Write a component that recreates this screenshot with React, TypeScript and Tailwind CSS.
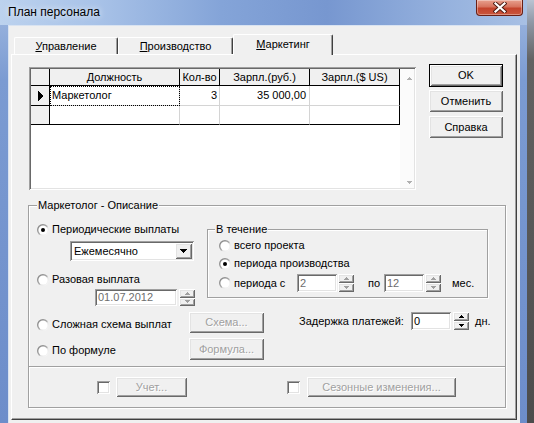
import { useId } from "react";

const raised =
  "shadow-[inset_1px_1px_0_#ffffff,inset_-1px_-1px_0_#696969,inset_2px_2px_0_#e3e3e3,inset_-2px_-2px_0_#a0a0a0]";
const sunken =
  "shadow-[inset_1px_1px_0_#a0a0a0,inset_-1px_-1px_0_#ffffff,inset_2px_2px_0_#696969,inset_-2px_-2px_0_#e3e3e3]";
const etched = "border border-[#a0a0a0] shadow-[inset_1px_1px_0_#ffffff,1px_1px_0_#ffffff]";
const greyText = "text-[#a0a0a0] [text-shadow:1px_1px_0_#ffffff]";

function Radio({ checked = false }: { checked?: boolean }) {
  const id = "r" + useId().replace(/[^a-zA-Z0-9]/g, "");
  return (
    <svg width="12" height="12" viewBox="0 0 12 12" className="shrink-0">
      <defs>
        <linearGradient id={id} x1="0" y1="0" x2="1" y2="1">
          <stop offset="0" stopColor="#7a7a7a" />
          <stop offset="0.5" stopColor="#a8a8a8" />
          <stop offset="0.6" stopColor="#e6e6e6" />
          <stop offset="1" stopColor="#ffffff" />
        </linearGradient>
      </defs>
      <circle cx="6" cy="6" r="6" fill={`url(#${id})`} />
      <circle cx="6" cy="6" r="4.6" fill="#ffffff" />
      {checked && <circle cx="6" cy="6" r="2" fill="#000000" />}
    </svg>
  );
}

function RadioLabel({ checked, children }: { checked?: boolean; children: React.ReactNode }) {
  return (
    <div className="flex h-[13px] items-center gap-[3px] whitespace-nowrap">
      <Radio checked={checked} />
      <span>{children}</span>
    </div>
  );
}

function Arrow({ up, color }: { up?: boolean; color: string }) {
  return (
    <svg width="5" height="3" viewBox="0 0 5 3" shapeRendering="crispEdges">
      {up ? (
        <>
          <rect x="2" y="0" width="1" height="1" fill={color} />
          <rect x="1" y="1" width="3" height="1" fill={color} />
          <rect x="0" y="2" width="5" height="1" fill={color} />
        </>
      ) : (
        <>
          <rect x="0" y="0" width="5" height="1" fill={color} />
          <rect x="1" y="1" width="3" height="1" fill={color} />
          <rect x="2" y="2" width="1" height="1" fill={color} />
        </>
      )}
    </svg>
  );
}

function Spin({ enabled = false, className = "" }: { enabled?: boolean; className?: string }) {
  const c = enabled ? "#000000" : "#a0a0a0";
  return (
    <div className={`flex w-[16px] shrink-0 flex-col ${className}`}>
      <div className={`flex flex-1 items-center justify-center bg-[#f0f0f0] ${raised}`}>
        <Arrow up color={c} />
      </div>
      <div className={`flex flex-1 items-center justify-center bg-[#f0f0f0] ${raised}`}>
        <Arrow color={c} />
      </div>
    </div>
  );
}

function Field({ value, disabled = false, className = "" }: { value: string; disabled?: boolean; className?: string }) {
  return (
    <div className={`flex shrink-0 items-center bg-white pl-[3px] ${sunken} ${className} ${disabled ? "text-[#6d6d6d]" : ""}`}>
      {value}
    </div>
  );
}

function Btn({
  children,
  className = "",
  disabled = false,
  isDefault = false,
}: {
  children: React.ReactNode;
  className?: string;
  disabled?: boolean;
  isDefault?: boolean;
}) {
  return (
    <div className={`shrink-0 bg-[#f0f0f0] ${isDefault ? "border border-black" : ""} ${className}`}>
      <div className={`flex h-full w-full items-center justify-center whitespace-nowrap ${raised} ${disabled ? greyText : ""}`}>
        {children}
      </div>
    </div>
  );
}

function Checkbox() {
  return <div className={`h-[13px] w-[13px] shrink-0 bg-white ${sunken}`} />;
}

function HeadCell({ className, children }: { className: string; children: React.ReactNode }) {
  return (
    <div className={`flex items-center justify-center border-r border-b border-black bg-[#f0f0f0] ${className}`}>
      {children}
    </div>
  );
}

function Grid() {
  return (
    <div className={`mt-[12px] flex h-[123px] w-[387px] shrink-0 bg-white p-[2px] ${sunken}`}>
      <div className="flex w-[369px] flex-col">
        <div className="flex h-[17px]">
          <div className="w-[19px] border-r border-b border-black bg-[#f0f0f0]" />
          <HeadCell className="w-[130px]">Должность</HeadCell>
          <HeadCell className="w-[40px]">Кол-во</HeadCell>
          <HeadCell className="w-[90px]">Зарпл.(руб.)</HeadCell>
          <HeadCell className="w-[90px]">Зарпл.($ US)</HeadCell>
        </div>
        <div className="flex h-[20px]">
          <div className="flex w-[19px] items-center justify-center border-r border-b border-black bg-[#f0f0f0] pl-[2px]">
            <svg width="6" height="10" viewBox="0 0 6 10" shapeRendering="crispEdges">
              <path d="M0 0H1V10H0zM1 1H2V9H1zM2 2H3V8H2zM3 3H4V7H3zM4 4H5V6H4z" fill="#000" />
            </svg>
          </div>
          <div className="relative flex w-[130px] items-center border-r border-b border-[#d4d4d4] pl-[2px]">
            <div className="absolute inset-0 right-[-1px] bottom-[-1px] border border-dotted border-black" />
            Маркетолог
          </div>
          <div className="flex w-[40px] items-center justify-end border-r border-b border-[#d4d4d4] pr-[2px]">3</div>
          <div className="flex w-[90px] items-center justify-end border-r border-b border-[#d4d4d4] pr-[3px]">
            35 000,00
          </div>
          <div className="w-[90px] border-r border-b border-r-black border-b-[#d4d4d4]" />
        </div>
        <div className="flex h-[19px]">
          <div className="w-[19px] border-r border-b border-black bg-[#f0f0f0]" />
          <div className="w-[130px] border-r border-b border-r-[#d4d4d4] border-b-black" />
          <div className="w-[40px] border-r border-b border-r-[#d4d4d4] border-b-black" />
          <div className="w-[90px] border-r border-b border-r-[#d4d4d4] border-b-black" />
          <div className="w-[90px] border-r border-b border-black" />
        </div>
      </div>
      <div className="flex w-[14px] flex-col items-center justify-between bg-[#fbfbfb] pt-[8px] pb-[4px] pl-[4px]">
        <Arrow up color="#b0b0b0" />
        <Arrow color="#b0b0b0" />
      </div>
    </div>
  );
}

function Tab({ className, selected = false, children }: { className: string; selected?: boolean; children: React.ReactNode }) {
  return (
    <div
      className={`flex shrink-0 items-center justify-center rounded-t-[2px] border-t border-r border-l border-t-white border-r-[#404040] border-l-white shadow-[inset_-1px_0_0_#a0a0a0] ${
        selected ? "relative z-10 -mb-px h-[21px] bg-[#f0f0f0] pb-[2px]" : "h-[17px]"
      } ${className}`}
    >
      {children}
    </div>
  );
}

function CloseButton() {
  return (
    <div className="mr-[4px] flex h-[16px] w-[47px] items-center justify-center rounded-b-[4px] border border-t-0 border-[#6a1f14] bg-[linear-gradient(180deg,#e8a08e_0%,#d7735e_45%,#c4432c_55%,#c9563c_100%)] shadow-[inset_0_0_0_1px_rgba(255,255,255,0.35)]">
      <svg width="14" height="11" viewBox="0 0 14 11">
        <path d="M2.5 1.5L11.5 9.5M11.5 1.5L2.5 9.5" stroke="#4b1a12" strokeWidth="4" strokeLinecap="square" />
        <path d="M2.5 1.5L11.5 9.5M11.5 1.5L2.5 9.5" stroke="#ffffff" strokeWidth="2.2" strokeLinecap="square" />
      </svg>
    </div>
  );
}

export default function App() {
  return (
    <div className="flex h-[423px] w-[534px] overflow-hidden bg-[#4f4f4f] font-['Liberation_Sans',Arial,sans-serif] text-[11px] leading-[13px] text-black">
      <div className="flex w-[527px] shrink-0 flex-col bg-[linear-gradient(180deg,#9fb8e0_0px,#7b9bd2_80px,#6d8dca_100%)]">
        <div className="flex h-[25px] shrink-0 items-start justify-between bg-[linear-gradient(90deg,#bcd2ee_0%,#a9c3e8_18%,#84a4d8_42%,#7797d0_62%,#96b2de_85%,#a8c0e4_100%)]">
          <span className="pt-[5px] pl-[8px] text-[12px] leading-[15px] [text-shadow:0_0_6px_#ffffff]">План персонала</span>
          <CloseButton />
        </div>
        <div className="flex min-h-0 flex-1 pr-[7px] pl-[8px]">
          <div className="flex-1 bg-[#f0f0f0] pt-[9px] pl-[3px] shadow-[inset_1px_1px_0_#d9e3f1]">
            <div className="w-[506px]">
              <div className="flex h-[20px] items-end pl-[3px]">
                <Tab className="w-[104px]">
                  <span><span className="underline">У</span>правление</span>
                </Tab>
                <Tab className="w-[115px]">
                  <span><span className="underline">П</span>роизводство</span>
                </Tab>
                <Tab className="w-[100px]" selected>
                  <span><span className="underline">М</span>аркетинг</span>
                </Tab>
              </div>
              <div className="h-[366px] border border-t-white border-r-[#404040] border-b-[#404040] border-l-white shadow-[inset_-1px_-1px_0_#a0a0a0]">
                <div className="flex items-start pl-[17px]">
                  <Grid />
                  <div className="mt-[9px] ml-[13px] flex flex-col">
                    <Btn isDefault className="h-[23px] w-[74px]">OK</Btn>
                    <Btn className="mt-[3px] h-[22px] w-[74px]">Отменить</Btn>
                    <Btn className="mt-[4px] h-[22px] w-[74px]">Справка</Btn>
                  </div>
                </div>

                <div className={`relative mt-[15px] ml-[16px] h-[203px] w-[478px] ${etched}`}>
                  <span className="absolute -top-[7px] left-[8px] bg-[#f0f0f0] px-[1px]">Маркетолог - Описание</span>

                  <div className="h-[161px] border-b border-[#a0a0a0] shadow-[0_1px_0_#ffffff]">
                    <div className="flex h-[100px]">
                      <div className="w-[178px] shrink-0">
                        <div className="mt-[17px] ml-[8px]">
                          <RadioLabel checked>Периодические выплаты</RadioLabel>
                        </div>
                        <div className={`mt-[5px] ml-[41px] flex h-[20px] w-[124px] items-center bg-white p-[2px] ${sunken}`}>
                          <span className="flex-1 pl-[2px]">Ежемесячно</span>
                          <div className={`flex h-[16px] w-[17px] items-center justify-center bg-[#f0f0f0] ${raised}`}>
                            <svg width="7" height="4" viewBox="0 0 7 4" shapeRendering="crispEdges">
                              <path d="M0 0H7V1H0zM1 1H6V2H1zM2 2H5V3H2zM3 3H4V4H3z" fill="#000" />
                            </svg>
                          </div>
                        </div>
                        <div className="mt-[12px] ml-[8px]">
                          <RadioLabel>Разовая выплата</RadioLabel>
                        </div>
                        <div className="mt-[3px] ml-[66px] flex">
                          <Field value="01.07.2012" disabled className="h-[17px] w-[82px]" />
                          <Spin className="ml-[2px] h-[17px]" />
                        </div>
                      </div>

                      <div className={`relative mt-[23px] h-[69px] w-[281px] shrink-0 ${etched}`}>
                        <span className="absolute -top-[7px] left-[7px] bg-[#f0f0f0] px-[1px]">В течение</span>
                        <div className="mt-[9px] ml-[11px]">
                          <RadioLabel>всего проекта</RadioLabel>
                        </div>
                        <div className="mt-[5px] ml-[11px]">
                          <RadioLabel checked>периода производства</RadioLabel>
                        </div>
                        <div className="mt-[4px] ml-[11px] flex h-[18px] items-center">
                          <div className="w-[78px] shrink-0">
                            <RadioLabel>периода с</RadioLabel>
                          </div>
                          <Field value="2" disabled className="h-[18px] w-[40px]" />
                          <Spin className="ml-[1px] h-[18px]" />
                          <span className="ml-[14px] w-[16px] shrink-0">по</span>
                          <Field value="12" disabled className="h-[18px] w-[40px]" />
                          <Spin className="ml-[1px] h-[18px]" />
                          <span className="ml-[11px]">мес.</span>
                        </div>
                      </div>
                    </div>

                    <div className="mt-[6px] flex h-[21px] items-start">
                      <div className="mt-[6px] ml-[8px] w-[152px] shrink-0">
                        <RadioLabel>Сложная схема выплат</RadioLabel>
                      </div>
                      <Btn disabled className="h-[21px] w-[75px]">Схема...</Btn>
                      <span className="mt-[3px] ml-[35px] w-[112px] shrink-0 whitespace-nowrap">Задержка платежей:</span>
                      <Field value="0" className="h-[18px] w-[40px]" />
                      <Spin enabled className="ml-[2px] h-[18px]" />
                      <span className="mt-[3px] ml-[6px]">дн.</span>
                    </div>

                    <div className="mt-[5px] flex h-[22px] items-start">
                      <div className="mt-[6px] ml-[8px] w-[152px] shrink-0">
                        <RadioLabel>По формуле</RadioLabel>
                      </div>
                      <Btn disabled className="h-[22px] w-[75px]">Формула...</Btn>
                    </div>
                  </div>

                  <div className="mt-[10px] flex h-[20px] items-center">
                    <div className="ml-[68px]">
                      <Checkbox />
                    </div>
                    <Btn disabled className="ml-[6px] h-[20px] w-[71px]">Учет...</Btn>
                    <div className="ml-[100px]">
                      <Checkbox />
                    </div>
                    <Btn disabled className="ml-[7px] h-[20px] w-[149px]">Сезонные изменения...</Btn>
                  </div>
                </div>
              </div>
            </div>
          </div>
        </div>
      </div>
      <div className="w-[7px] shrink-0 bg-[linear-gradient(180deg,#b9c3d2_0px,#8f98a6_22px,#626262_60px,#4c4c4c_100%)]" />
    </div>
  );
}
